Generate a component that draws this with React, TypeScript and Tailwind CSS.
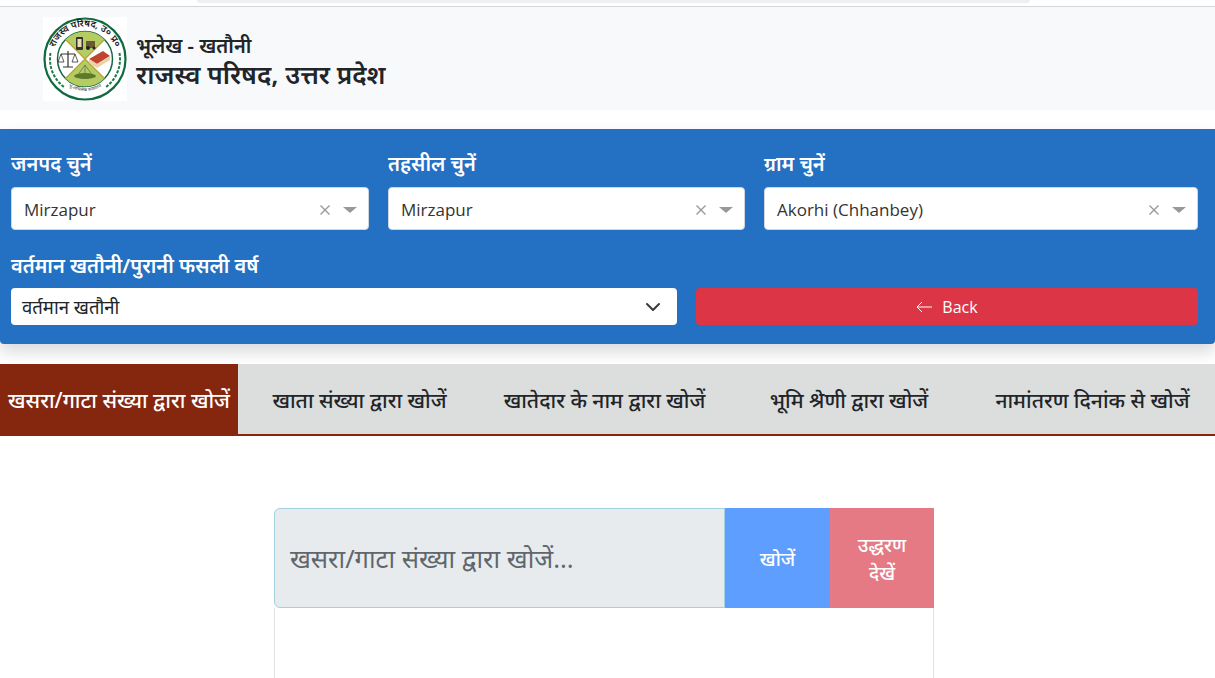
const font = "[font-family:'Noto_Sans','Noto_Sans_Devanagari','Lohit_Devanagari','Liberation_Sans',sans-serif]";

const Logo = () => (
  <svg viewBox="0 0 84 84" className="w-[84px] h-[84px] bg-white shrink-0">
    <circle cx="42" cy="42" r="40.5" fill="#fff" stroke="#0f6b3f" strokeWidth="2.2" />
    <circle cx="42" cy="42" r="27.5" fill="#fff" stroke="#0f6b3f" strokeWidth="1.5" />
    <path d="M22.5 22.5 A27.5 27.5 0 0 1 61.5 22.5 L42 42 Z" fill="#b5cc62" />
    <path d="M22.5 61.5 A27.5 27.5 0 0 0 61.5 61.5 L42 42 Z" fill="#b5cc62" />
    <path d="M22.5 22.5 L61.5 61.5 M61.5 22.5 L22.5 61.5" stroke="#b8a13a" strokeWidth="1.2" />
    <rect x="33" y="20" width="7" height="13" rx="1" fill="#333" />
    <rect x="34.5" y="22" width="4" height="8" fill="#eadfae" />
    <rect x="43" y="24" width="9" height="7" fill="#6b5a2a" />
    <circle cx="45" cy="31" r="2" fill="#222" />
    <circle cx="51" cy="31" r="1.5" fill="#222" />
    <path d="M25 34 V50 M18 37 H32 M20 50 H30" stroke="#333" strokeWidth="1.2" fill="none" />
    <path d="M18 37 L15 45 H21 Z M32 37 L29 45 H35 Z" stroke="#333" strokeWidth="0.8" fill="none" />
    <path d="M46 42 L60 34 L67 39 L54 47 Z" fill="#c0452f" />
    <path d="M46 42 L54 47 L67 39 V43 L54 51 L46 46 Z" fill="#edd2a8" />
    <path d="M42 48 L34 59 M42 48 L50 59 M42 48 V59" stroke="#555" strokeWidth="0.6" />
    <ellipse cx="42" cy="59" rx="11" ry="3" fill="#5d7a2c" />
    <g fill="none" stroke="#1c7a45" strokeWidth="2" strokeDasharray="3 1.4">
      <path d="M7.5 36 A35 35 0 0 0 21 70" />
      <path d="M76.5 36 A35 35 0 0 1 63 70" />
    </g>
    <path id="logoTop" d="M9.5 42 A32.5 32.5 0 0 1 74.5 42" fill="none" />
    <text fontSize="9.5" fontWeight="600" fill="#1a1a1a" className={font}>
      <textPath href="#logoTop" startOffset="50%" textAnchor="middle">राजस्व परिषद, उ० प्र०</textPath>
    </text>
    <path id="logoBottom" d="M17 62 A32 32 0 0 0 67 62" fill="none" />
    <text fontSize="4.5" fill="#333" className={font}>
      <textPath href="#logoBottom" startOffset="50%" textAnchor="middle">भू-अभिलेख कार्यालय</textPath>
    </text>
  </svg>
);

const Field = ({ label, value, className }: { label: string; value: string; className: string }) => (
  <div className={className}>
    <p className="text-[20px] leading-[27px] font-semibold text-white mb-[10px]">{label}</p>
    <div className="h-[43px] pt-[2px] bg-white rounded-[4px] border border-[#cfd6de] flex items-center pl-[12px] pr-[11px] text-[#333] text-[17px] [font-family:'Open_Sans',sans-serif]">
      <span className="flex-1">{value}</span>
      <svg viewBox="0 0 12 12" className="w-[12px] h-[12px] mr-[12px]">
        <path d="M1.5 1.5 L10.5 10.5 M10.5 1.5 L1.5 10.5" stroke="#999" strokeWidth="1.4" />
      </svg>
      <span className="w-0 h-0 border-x-[7px] border-x-transparent border-t-[6px] border-t-[#999]" />
    </div>
  </div>
);

const tabs = [
  { text: "खाता संख्या द्वारा खोजें", w: "w-[243px]" },
  { text: "खातेदार के नाम द्वारा खोजें", w: "w-[247px]" },
  { text: "भूमि श्रेणी द्वारा खोजें", w: "w-[242px]" },
  { text: "नामांतरण दिनांक से खोजें", w: "flex-1" },
];

export default function App() {
  return (
    <div className={`w-[1215px] h-[678px] overflow-hidden bg-white ${font}`}>
      <div className="h-[7px] border-b border-[#d4d6d9] bg-white">
        <div className="w-[833px] ml-[197px] h-[3px] bg-[#eeeff1] rounded-b" />
      </div>

      <header className="h-[103px] bg-[#f8f9fa] flex items-start pt-[10px] pl-[43px]">
        <Logo />
        <div className="ml-[9px] mt-[15px] text-[#212529] font-semibold">
          <p className="text-[20px] leading-[28px]">भूलेख - खतौनी</p>
          <p className="text-[26px] leading-[29px]">राजस्व परिषद, उत्तर प्रदेश</p>
        </div>
      </header>

      <section className="mt-[19px] h-[215px] bg-[#2470c2] rounded-b-[4px] px-[11px] pt-[21px] shadow-[0_8px_16px_rgba(0,0,0,0.15)]">
        <div className="flex gap-[19px]">
          <Field label="जनपद चुनें" value="Mirzapur" className="w-[358px]" />
          <Field label="तहसील चुनें" value="Mirzapur" className="w-[357px]" />
          <Field label="ग्राम चुनें" value="Akorhi (Chhanbey)" className="w-[434px]" />
        </div>
        <div className="flex gap-[19px] mt-[22px]">
          <div className="w-[666px]">
            <p className="text-[20px] leading-[27px] font-semibold text-white mb-[9px]">वर्तमान खतौनी/पुरानी फसली वर्ष</p>
            <div className="h-[37px] bg-white rounded-[4px] flex items-center pl-[11px] pr-[16px] text-[18.5px] text-[#212529]">
              <span className="flex-1">वर्तमान खतौनी</span>
              <svg viewBox="0 0 16 16" className="w-[16px] h-[16px]">
                <path d="M2 5 L8 11 L14 5" fill="none" stroke="#343a40" strokeWidth="2" strokeLinecap="round" strokeLinejoin="round" />
              </svg>
            </div>
          </div>
          <button className="self-end w-[502px] h-[37px] bg-[#dc3545] rounded-[4px] text-white text-[16px] flex items-center justify-center gap-[9px] [font-family:'Open_Sans',sans-serif]">
            <svg viewBox="0 0 16 16" className="w-[17px] h-[16px]">
              <path d="M15.5 8 H0.5 M5.5 3 L0.5 8 L5.5 13" fill="none" stroke="#fff" strokeWidth="1" />
            </svg>
            Back
          </button>
        </div>
      </section>

      <nav className="mt-[20px] h-[72px] bg-[#dcdedd] border-b-2 border-[#85260f] flex text-[21px] text-[#212529] font-medium">
        <div className="w-[238px] h-[72px] shrink-0 pt-[2px] bg-[#85260f] text-white flex items-center justify-center whitespace-nowrap">
          खसरा/गाटा संख्या द्वारा खोजें
        </div>
        {tabs.map((t) => (
          <div key={t.text} className={`${t.w} pt-[3px] flex items-center justify-center whitespace-nowrap`}>
            {t.text}
          </div>
        ))}
      </nav>

      <main className="mt-[72px] ml-[274px] w-[660px]">
        <div className="flex h-[100px]">
          <div className="flex-1 bg-[#e7ebee] border border-[#a3d0e0] rounded-l-[6px] flex items-center pl-[15px] text-[25.5px] text-[#5f666c]">
            खसरा/गाटा संख्या द्वारा खोजें...
          </div>
          <button className="w-[105px] pt-[2px] bg-[#5e9eff] text-white text-[19px] font-medium">खोजें</button>
          <button className="w-[104px] pt-[2px] bg-[#e67a84] text-white text-[19px] leading-[28px] font-medium px-[20px]">उद्धरण देखें</button>
        </div>
        <div className="h-[80px] border-x border-[#dee2e6]" />
      </main>
    </div>
  );
}
